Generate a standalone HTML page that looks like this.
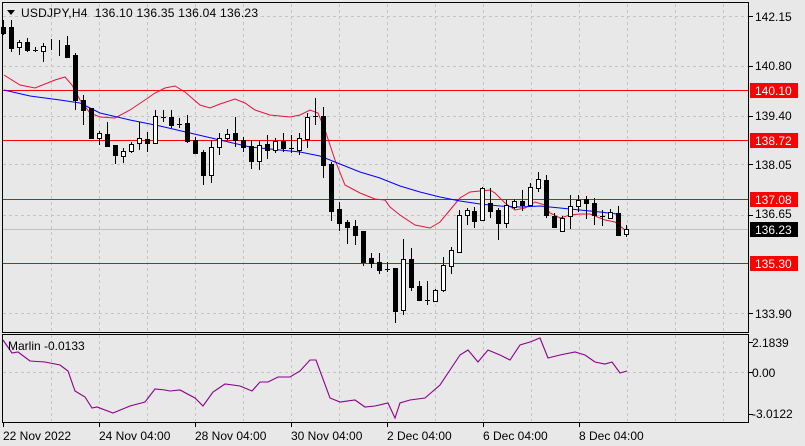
<!DOCTYPE html>
<html><head><meta charset="utf-8"><style>
html,body{margin:0;padding:0;background:#e8e8e8;}
svg{display:block;font-family:"Liberation Sans",sans-serif;font-size:12px;}
.w{fill:#fff}.b{fill:#000}
</style></head><body>
<svg width="805" height="446" viewBox="0 0 805 446" xmlns="http://www.w3.org/2000/svg">
<rect width="805" height="446" fill="#e8e8e8"/>
<g stroke="#c4c4c4" stroke-dasharray="3,3" shape-rendering="crispEdges">
<path d="M51.5 4V332M99.5 4V332M147.5 4V332M195.5 4V332M243.5 4V332M291.5 4V332M339.5 4V332M387.5 4V332M435.5 4V332M483.5 4V332M531.5 4V332M579.5 4V332M627.5 4V332M675.5 4V332M723.5 4V332"/>
<path d="M51.5 335V421M99.5 335V421M147.5 335V421M195.5 335V421M243.5 335V421M291.5 335V421M339.5 335V421M387.5 335V421M435.5 335V421M483.5 335V421M531.5 335V421M579.5 335V421M627.5 335V421M675.5 335V421M723.5 335V421"/>
<path d="M3 16.5H748M3 66.5H748M3 116.5H748M3 164.5H748M3 215.5H748M3 313.5H748M3 372.5H748"/>
</g>
<path d="M3 229.5H748" stroke="#c0c0c0" shape-rendering="crispEdges"/>
<g stroke="#ff0000" shape-rendering="crispEdges"><path d="M3 90.5H748M3 140.5H748M3 199.5H748M3 263.5H748"/></g>
<polyline fill="none" stroke="#e8103c" stroke-width="1" points="4,75 20,85 35,88 55,80 65,77 72,85 80,100 90,113 100,117 115,118 130,110 145,100 155,93 165,88 175,86 185,92 200,105 210,108 220,104 235,99 245,103 255,110 270,115 290,117 300,115 310,110 318,113 325,130 335,160 345,185 360,193 375,199 385,200 390,207 400,215 415,225 430,228 440,222 450,210 460,198 470,192 490,190 495,193 505,203 515,210 525,208 535,202 545,205 550,213 560,218 570,215 580,214 590,214 605,220 615,222 625,230"/>
<polyline fill="none" stroke="#0000ff" stroke-width="1" points="4,90 30,96 60,100 80,103 100,113 130,120 160,126 190,133 220,140 250,147 280,150 300,152 320,156 340,164 360,172 380,178 400,186 420,192 440,197 460,201 480,204 500,206 520,207 540,206 560,208 580,210 600,212 617,214"/>
<g stroke="#000" shape-rendering="crispEdges">
<path d="M3.5 20V35M11.5 20V52M19.5 40V55M27.5 38V52M35.5 47V52M43.5 43V62M51.5 39V50M59.5 40V56M67.5 36V58M75.5 53V110M83.5 95V125M91.5 108V138M99.5 131V145M107.5 122V147M115.5 145V164M123.5 148V163M131.5 142V153M139.5 122V150M147.5 132V152M155.5 110V143M163.5 110V122M171.5 110V128M179.5 118V128M187.5 115V143M195.5 137V154M203.5 150V185M211.5 140V183M219.5 133V155M227.5 129V140M235.5 117V147M243.5 137V152M251.5 140V169M259.5 140V170M267.5 135V159M275.5 138V153M283.5 133V152M291.5 135V153M299.5 133V155M307.5 113V148M315.5 98V125M323.5 107V178M331.5 162V221M339.5 202V231M347.5 220V244M355.5 220V245M363.5 231V266M371.5 253V268M379.5 253V274M387.5 262V272M395.5 268V323M403.5 239V315M411.5 248V291M419.5 281V301M427.5 281V305M435.5 289V302M443.5 257V292M451.5 247V274M459.5 210V253M467.5 208V225M474.5 207V228M482.5 187V220M490.5 188V218M498.5 208V240M506.5 200V228M514.5 199V209M522.5 190V211M530.5 183V205M538.5 172V192M546.5 175V218M554.5 213V228M562.5 216V231M570.5 195V229M578.5 195V212M586.5 196V219M594.5 198V225M602.5 210V226M610.5 209V218M618.5 206V236M626.5 225V237"/>
<path d="M33 50.5H38M161 117.5H166M177 124.5H182M289 148.5H294M313 116.5H318M385 269.5H390M425 300.5H430M600 216.5H605"/>
<g class="b">
<rect x="1.5" y="27.5" width="4" height="6"/><rect x="9.5" y="27.5" width="4" height="21"/><rect x="25.5" y="42.5" width="4" height="8"/><rect x="65.5" y="45.5" width="4" height="12"/><rect x="73.5" y="55.5" width="4" height="45"/><rect x="81.5" y="100.5" width="4" height="10"/><rect x="89.5" y="108.5" width="4" height="30"/><rect x="105.5" y="134.5" width="4" height="12"/><rect x="113.5" y="145.5" width="4" height="10"/><rect x="145.5" y="139.5" width="4" height="4"/><rect x="169.5" y="117.5" width="4" height="8"/><rect x="185.5" y="123.5" width="4" height="18"/><rect x="193.5" y="140.5" width="4" height="13"/><rect x="201.5" y="152.5" width="4" height="23"/><rect x="233.5" y="133.5" width="4" height="7"/><rect x="241.5" y="140.5" width="4" height="7"/><rect x="249.5" y="146.5" width="4" height="15"/><rect x="265.5" y="144.5" width="4" height="6"/><rect x="281.5" y="141.5" width="4" height="7"/><rect x="321.5" y="116.5" width="4" height="49"/><rect x="329.5" y="164.5" width="4" height="47"/><rect x="337.5" y="209.5" width="4" height="14"/><rect x="345.5" y="222.5" width="4" height="5"/><rect x="353.5" y="226.5" width="4" height="9"/><rect x="361.5" y="231.5" width="4" height="31"/><rect x="369.5" y="258.5" width="4" height="5"/><rect x="377.5" y="262.5" width="4" height="8"/><rect x="393.5" y="268.5" width="4" height="43"/><rect x="409.5" y="259.5" width="4" height="28"/><rect x="417.5" y="286.5" width="4" height="14"/><rect x="472.5" y="211.5" width="4" height="10"/><rect x="488.5" y="203.5" width="4" height="8"/><rect x="496.5" y="210.5" width="4" height="13"/><rect x="520.5" y="201.5" width="4" height="4"/><rect x="544.5" y="180.5" width="4" height="35"/><rect x="552.5" y="216.5" width="4" height="11"/><rect x="584.5" y="199.5" width="4" height="4"/><rect x="592.5" y="203.5" width="4" height="12"/><rect x="616.5" y="213.5" width="4" height="22"/>
</g>
<g class="w">
<rect x="17.5" y="42.5" width="4" height="5"/><rect x="41.5" y="46.5" width="4" height="5"/><rect x="97.5" y="133.5" width="4" height="5"/><rect x="121.5" y="151.5" width="4" height="5"/><rect x="129.5" y="144.5" width="4" height="7"/><rect x="137.5" y="138.5" width="4" height="5"/><rect x="153.5" y="116.5" width="4" height="27"/><rect x="209.5" y="147.5" width="4" height="28"/><rect x="217.5" y="138.5" width="4" height="9"/><rect x="225.5" y="134.5" width="4" height="4"/><rect x="257.5" y="145.5" width="4" height="16"/><rect x="273.5" y="141.5" width="4" height="9"/><rect x="297.5" y="138.5" width="4" height="12"/><rect x="305.5" y="117.5" width="4" height="22"/><rect x="401.5" y="259.5" width="4" height="51"/><rect x="433.5" y="290.5" width="4" height="11"/><rect x="441.5" y="265.5" width="4" height="25"/><rect x="449.5" y="250.5" width="4" height="16"/><rect x="457.5" y="215.5" width="4" height="37"/><rect x="465.5" y="210.5" width="4" height="5"/><rect x="480.5" y="188.5" width="4" height="32"/><rect x="504.5" y="205.5" width="4" height="18"/><rect x="512.5" y="201.5" width="4" height="6"/><rect x="528.5" y="187.5" width="4" height="18"/><rect x="536.5" y="179.5" width="4" height="9"/><rect x="560.5" y="218.5" width="4" height="13"/><rect x="568.5" y="206.5" width="4" height="10"/><rect x="576.5" y="200.5" width="4" height="6"/><rect x="608.5" y="212.5" width="4" height="6"/><rect x="624.5" y="229.5" width="4" height="5"/>
</g>
</g>
<polyline fill="none" stroke="#8b008b" stroke-width="1.1" points="3,340 12,353 18,352 30,361 45,362 60,365 68,371 75,391 85,397 92,408 97,407 113,413 130,406 145,402 155,389 165,390 170,391 180,390 195,398 203,406 213,392 225,384 240,386 252,391 260,382 268,382 278,377 290,377 300,371 310,360 316,360 330,398 340,402 355,400 365,407 375,406 388,403 395,418 400,403 410,400 425,398 440,385 450,370 460,355 468,350 478,362 488,350 500,355 510,360 520,345 530,342 540,338 548,358 560,355 575,352 585,355 595,362 605,364 612,362 620,373 627,371"/>
<g fill="none" stroke="#000" shape-rendering="crispEdges">
<rect x="2.5" y="2.5" width="746" height="330"/>
<rect x="2.5" y="334.5" width="746" height="88"/>
<path d="M749 16.5h4M749 66.5h4M749 116.5h4M749 164.5h4M749 215.5h4M749 313.5h4M749 342.5h4M749 372.5h4M749 414.5h4M3.5 423v4M99.5 423v4M195.5 423v4M291.5 423v4M387.5 423v4M483.5 423v4M579.5 423v4"/>
</g>
<path d="M7 10h8l-4 5z" fill="#000"/>
<text x="21" y="17" fill="#000" xml:space="preserve" textLength="237" lengthAdjust="spacing">USDJPY,H4  136.10 136.35 136.04 136.23</text>
<text x="8" y="350" fill="#000">Marlin -0.0133</text>
<g fill="#000">
<text x="755" y="21">142.15</text><text x="755" y="70">140.80</text><text x="755" y="120">139.40</text><text x="755" y="169">138.05</text><text x="755" y="218">136.65</text><text x="755" y="318">133.90</text>
<text x="752" y="347">2.1839</text><text x="752" y="377">0.00</text><text x="752" y="418">-3.0122</text>
</g>
<rect x="750" y="83" width="48" height="15" fill="#ff0000"/><rect x="750" y="133" width="48" height="15" fill="#ff0000"/><rect x="750" y="192" width="48" height="15" fill="#ff0000"/><rect x="750" y="256" width="48" height="15" fill="#ff0000"/>
<rect x="750" y="222" width="48" height="15" fill="#000"/>
<g fill="#fff"><text x="755" y="95">140.10</text><text x="755" y="145">138.72</text><text x="755" y="204">137.08</text><text x="755" y="268">135.30</text><text x="755" y="234">136.23</text></g>
<g fill="#000"><text x="3" y="440">22 Nov 2022</text><text x="99" y="440">24 Nov 04:00</text><text x="195" y="440">28 Nov 04:00</text><text x="291" y="440">30 Nov 04:00</text><text x="387" y="440">2 Dec 04:00</text><text x="483" y="440">6 Dec 04:00</text><text x="579" y="440">8 Dec 04:00</text></g>
</svg>
</body></html>
